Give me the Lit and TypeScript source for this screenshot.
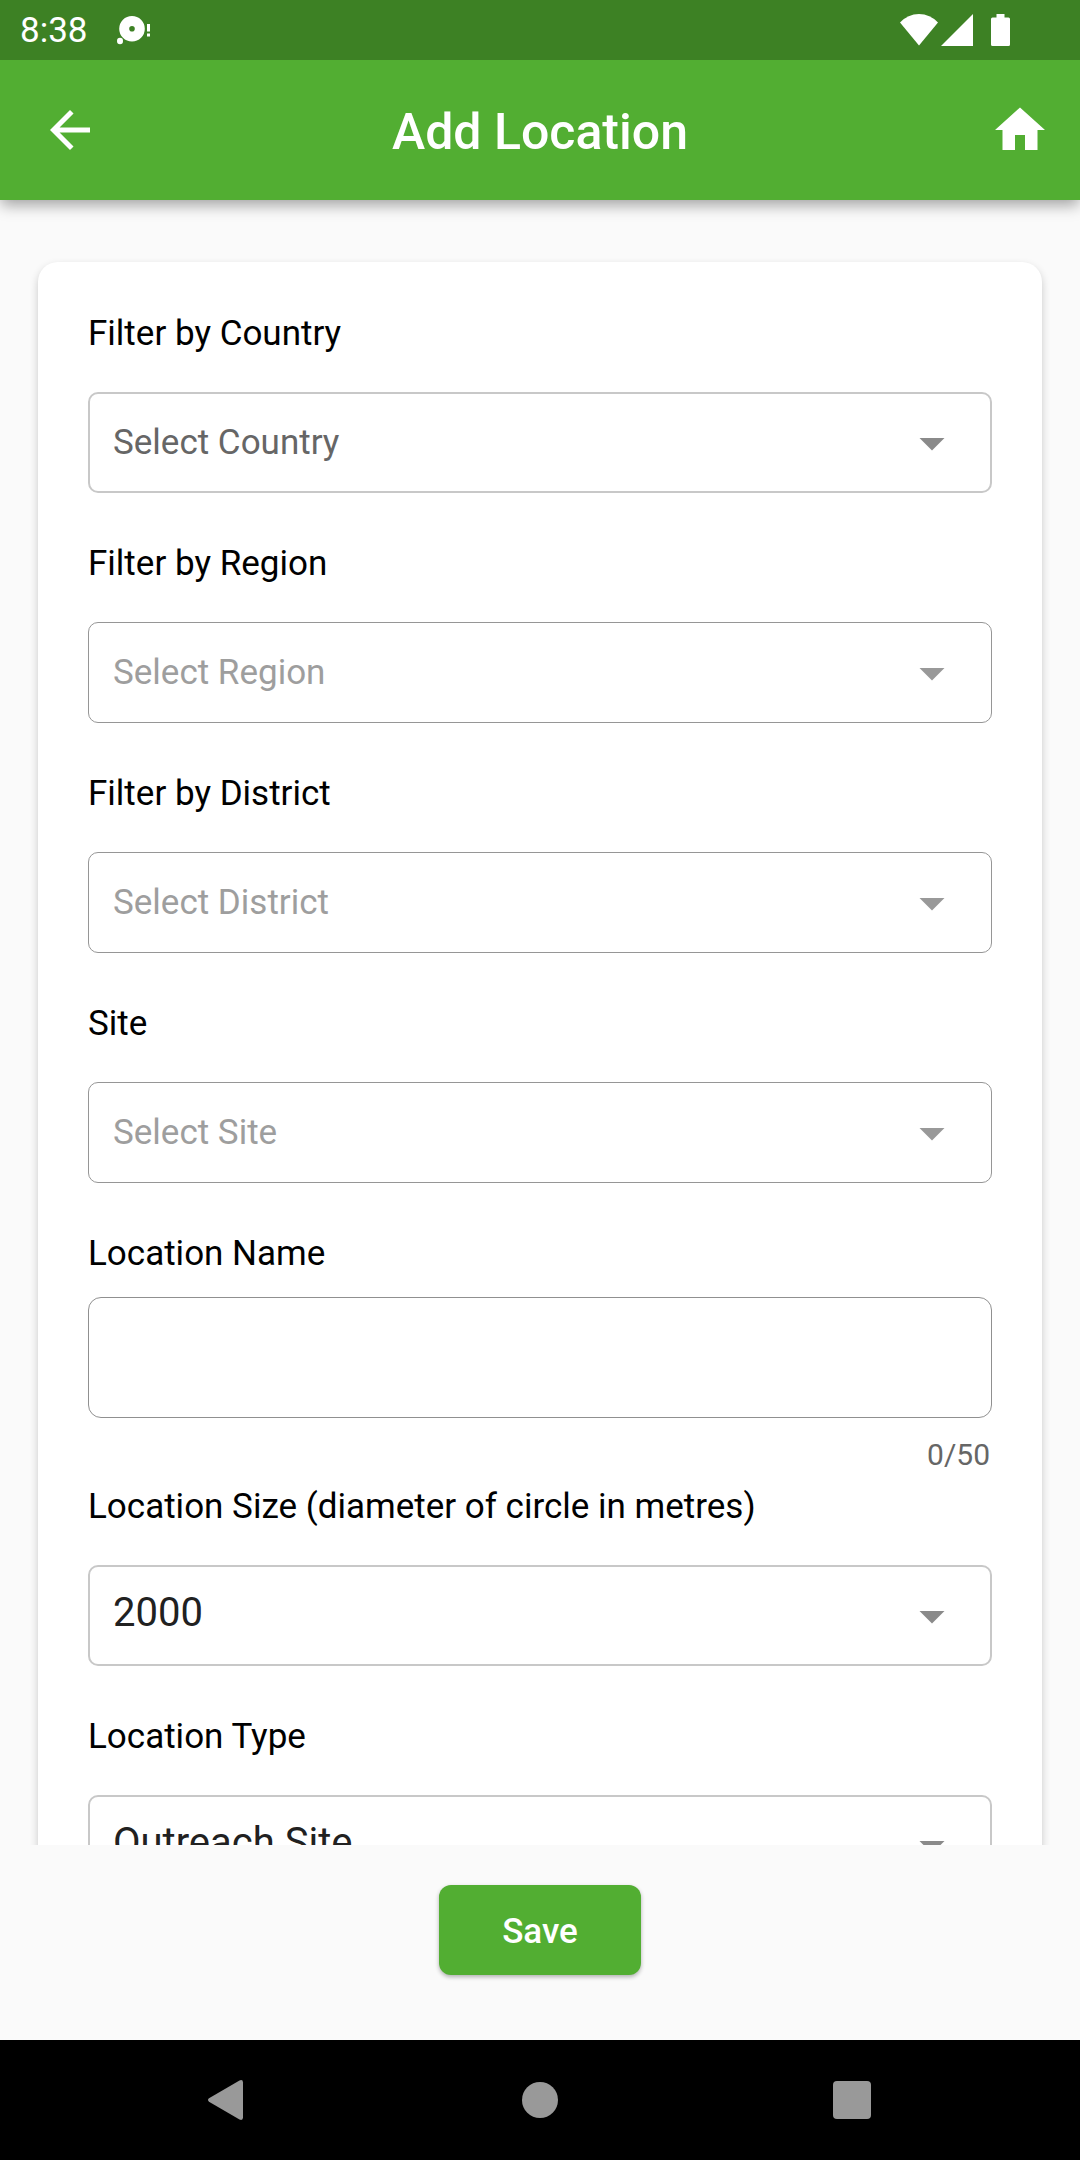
import { LitElement, html, css, nothing } from "lit";
import { customElement, property, state } from "lit/decorators.js";

@customElement("select-field")
class SelectField extends LitElement {
  @property() label = "";
  @property() hint = "";
  @property() value = "";
  @property({ type: Boolean }) disabled = false;

  static styles = css`
    :host {
      display: flex;
      flex-direction: column;
      gap: 38px;
    }
    .label {
      font-size: 35px;
      line-height: 41px;
      color: #000;
    }
    .box {
      display: grid;
      align-items: center;
    }
    .control {
      grid-area: 1 / 1;
      width: 100%;
      height: 101px;
      box-sizing: border-box;
      appearance: none;
      margin: 0;
      padding: 0 100px 6px 23px;
      border: 2px solid #c8c8c8;
      border-radius: 10px;
      background: transparent;
      font-family: inherit;
      font-size: 40px;
      color: #212121;
      opacity: 1;
    }
    .control.empty {
      padding-bottom: 0;
      font-size: 35px;
      color: #666;
    }
    .control:disabled {
      padding-left: 24px;
      border: 1px solid #969696;
      color: #9e9e9e;
    }
    .arrow {
      grid-area: 1 / 1;
      justify-self: end;
      width: 60px;
      height: 60px;
      margin-right: 30px;
      fill: #8a8a8a;
      pointer-events: none;
    }
    .control:disabled + .arrow {
      fill: #999;
    }
  `;

  render() {
    return html`
      <label class="label" for="control">${this.label}</label>
      <div class="box">
        <select
          id="control"
          class="control ${this.value ? "" : "empty"}"
          ?disabled=${this.disabled}
        >
          ${this.value
            ? html`<option>${this.value}</option>`
            : html`<option value="">${this.hint}</option>`}
        </select>
        <svg class="arrow" viewBox="0 0 24 24" aria-hidden="true">
          <path d="M7 10l5 5 5-5z" />
        </svg>
      </div>
    `;
  }
}

@customElement("counted-field")
class CountedField extends LitElement {
  @property() label = "";
  @property({ type: Number }) limit = 50;
  @state() private text = "";

  static styles = css`
    :host {
      display: flex;
      flex-direction: column;
    }
    .label {
      font-size: 35px;
      line-height: 41px;
      color: #000;
    }
    .input {
      width: 100%;
      height: 121px;
      box-sizing: border-box;
      margin: 23px 0 19px;
      padding: 0 24px;
      border: 1px solid #909090;
      border-radius: 13px;
      background: transparent;
      font-family: inherit;
      font-size: 40px;
      color: #212121;
    }
    .counter {
      padding-right: 2px;
      font-size: 30px;
      line-height: 35px;
      text-align: right;
      color: #666;
    }
  `;

  private onInput(e: Event) {
    this.text = (e.target as HTMLInputElement).value;
  }

  render() {
    return html`
      <label class="label" for="input">${this.label}</label>
      <input
        id="input"
        class="input"
        type="text"
        maxlength=${this.limit}
        .value=${this.text}
        @input=${this.onInput}
      />
      <div class="counter">${this.text.length}/${this.limit}</div>
    `;
  }
}

interface Choice {
  label: string;
  hint?: string;
  value?: string;
  disabled?: boolean;
}

const SITE_FIELDS: Choice[] = [
  { label: "Filter by Country", hint: "Select Country" },
  { label: "Filter by Region", hint: "Select Region", disabled: true },
  { label: "Filter by District", hint: "Select District", disabled: true },
  { label: "Site", hint: "Select Site", disabled: true },
];

const DETAIL_FIELDS: Choice[] = [
  { label: "Location Size (diameter of circle in metres)", value: "2000" },
  { label: "Location Type", value: "Outreach Site" },
];

@customElement("app-root")
class AppRoot extends LitElement {
  static styles = css`
    :host {
      display: flex;
      flex-direction: column;
      height: 100vh;
      background: #fafafa;
      font-family: Roboto, "Liberation Sans", sans-serif;
    }
    button {
      margin: 0;
      padding: 0;
      border: 0;
      background: none;
      font-family: inherit;
      color: inherit;
    }
    svg {
      display: block;
      fill: currentColor;
    }
    .status {
      flex: none;
      position: relative;
      z-index: 2;
      display: flex;
      align-items: center;
      justify-content: space-between;
      height: 60px;
      padding: 0 70px 0 20px;
      background: #3d8124;
      color: #fff;
    }
    .group {
      display: flex;
      align-items: center;
    }
    .notices {
      gap: 28px;
      font-size: 35px;
      line-height: 43px;
    }
    .signals {
      gap: 3px;
    }
    .battery {
      margin-left: 15px;
    }
    .appbar {
      flex: none;
      position: relative;
      z-index: 1;
      display: grid;
      grid-template-columns: 140px 1fr 140px;
      align-items: center;
      height: 140px;
      background: #52ae32;
      color: #fff;
      box-shadow: 0 6px 14px -1px rgba(0, 0, 0, 0.36);
    }
    .title {
      margin: 0;
      padding-top: 4px;
      font-size: 50px;
      line-height: 60px;
      font-weight: 500;
      text-align: center;
    }
    .action {
      display: grid;
      place-items: center;
      width: 140px;
      height: 140px;
    }
    .action.home {
      justify-self: end;
      width: 120px;
    }
    .content {
      flex: 1;
      min-height: 0;
      overflow-y: auto;
      scrollbar-width: none;
      padding: 62px 38px;
    }
    .card {
      display: flex;
      flex-direction: column;
      gap: 50px;
      padding: 51px 50px;
      border-radius: 20px;
      background: #fff;
      box-shadow: 0 4px 9px rgba(0, 0, 0, 0.2);
    }
    .details {
      display: flex;
      flex-direction: column;
      gap: 14px;
    }
    .group-fields {
      display: flex;
      flex-direction: column;
      gap: 50px;
    }
    .footer {
      flex: none;
      display: flex;
      justify-content: center;
      padding: 40px 0 65px;
    }
    .save {
      min-width: 202px;
      height: 90px;
      padding: 2px 60px 0;
      border-radius: 12px;
      background: #52ae32;
      color: #fff;
      font-size: 35px;
      font-weight: 500;
      box-shadow: 0 2px 4px rgba(0, 0, 0, 0.3);
    }
    .navbar {
      flex: none;
      display: flex;
      align-items: center;
      justify-content: center;
      gap: 232px;
      height: 120px;
      background: #000;
      color: #999;
    }
    .key {
      display: grid;
      place-items: center;
      width: 80px;
      height: 80px;
    }
  `;

  private choice(c: Choice) {
    return html`<select-field
      label=${c.label}
      hint=${c.hint ?? nothing}
      value=${c.value ?? nothing}
      ?disabled=${c.disabled}
    ></select-field>`;
  }

  render() {
    return html`
      <div class="status">
        <div class="group notices">
          <span>8:38</span>
          <svg width="36" height="32" viewBox="0 0 36 32" aria-hidden="true">
            <path
              fill-rule="evenodd"
              d="M16 2a12.8 12.8 0 1 1 0 25.600a12.800 12.800 0 1 1 0-25.600zM16 12a2.800 2.800 0 1 0 0 5.600a2.800 2.800 0 1 0 0-5.600z"
            />
            <ellipse cx="4" cy="27" rx="3" ry="3.200" />
            <path d="M31 10h3v7.500h-3zM31 19.500h3v3h-3z" />
          </svg>
        </div>
        <div class="group signals">
          <svg width="38" height="32" viewBox="0 0 38 32" aria-hidden="true">
            <path d="M0 8.500Q8 0 19 0T38 8.500L19 31.500z" />
          </svg>
          <svg width="32" height="32" viewBox="0 0 32 32" aria-hidden="true">
            <path d="M32 0v32H0z" />
          </svg>
          <svg class="battery" width="19" height="32" viewBox="0 0 19 32" aria-hidden="true">
            <path
              d="M5.500 0h8v3.500h4a1.500 1.500 0 0 1 1.500 1.500v25.500a1.500 1.500 0 0 1-1.500 1.500h-16a1.500 1.500 0 0 1-1.500-1.500v-25.500a1.500 1.500 0 0 1 1.500-1.500h4z"
            />
          </svg>
        </div>
      </div>

      <header class="appbar">
        <button class="action" aria-label="Back">
          <svg width="60" height="60" viewBox="0 0 24 24">
            <path d="M20 11H7.830l5.590-5.590L12 4l-8 8 8 8 1.410-1.410L7.830 13H20v-2z" />
          </svg>
        </button>
        <h1 class="title">Add Location</h1>
        <button class="action home" aria-label="Home">
          <svg width="60" height="60" viewBox="0 0 24 24">
            <path d="M10 20v-6h4v6h5v-8h3L12 3 2 12h3v8z" />
          </svg>
        </button>
      </header>

      <main class="content">
        <form class="card" id="location" @submit=${(e: Event) => e.preventDefault()}>
          ${SITE_FIELDS.map((c) => this.choice(c))}
          <div class="details">
            <counted-field label="Location Name" limit="50"></counted-field>
            <div class="group-fields">${DETAIL_FIELDS.map((c) => this.choice(c))}</div>
          </div>
        </form>
      </main>

      <footer class="footer">
        <button class="save" type="submit" form="location">Save</button>
      </footer>

      <nav class="navbar">
        <button class="key" aria-label="System back">
          <svg width="40" height="40" viewBox="0 0 40 40">
            <path d="M1 18.300L31.500 .400Q35 -.800 35 2.500V37.500Q35 40.800 31.500 39.600L1 21.700Q-1 20 1 18.300z" />
          </svg>
        </button>
        <button class="key" aria-label="System home">
          <svg width="40" height="40" viewBox="0 0 40 40"><circle cx="20" cy="20" r="18" /></svg>
        </button>
        <button class="key" aria-label="Recent apps">
          <svg width="40" height="40" viewBox="0 0 40 40">
            <rect x="1" y="1" width="38" height="38" rx="4" />
          </svg>
        </button>
      </nav>
    `;
  }
}
